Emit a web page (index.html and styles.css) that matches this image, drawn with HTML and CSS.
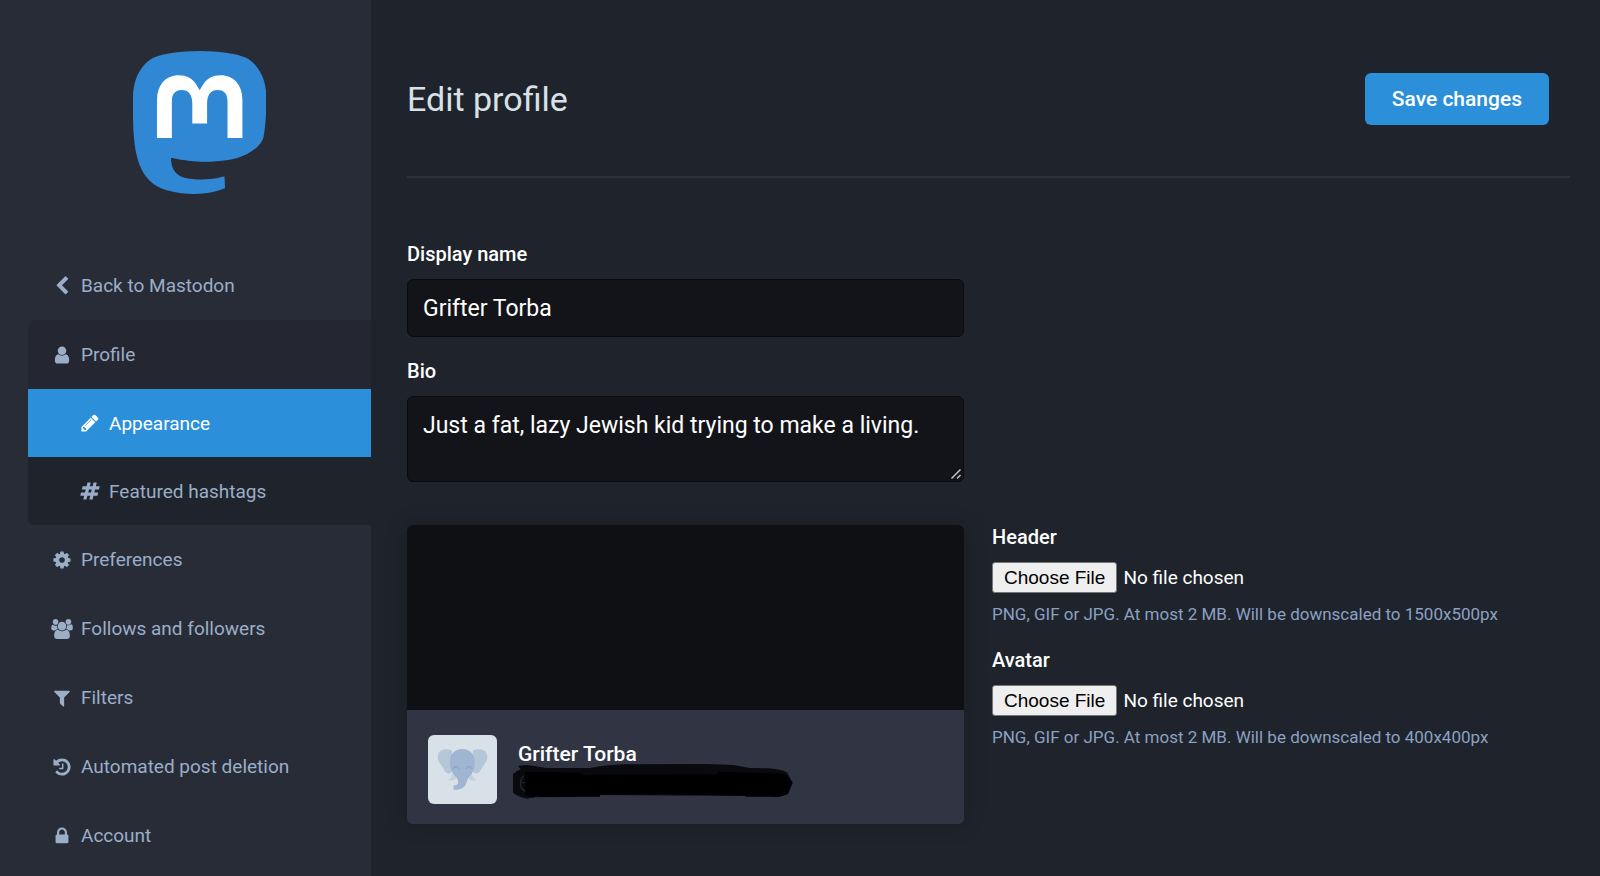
FILE: index.html
```html
<!DOCTYPE html>
<html lang="en">
<head>
    <meta charset="UTF-8">
    <meta name="viewport" content="width=device-width, initial-scale=1.0">
    <title>Edit profile - Mastodon</title>
    <link rel="stylesheet" href="styles.css">
</head>
<body>
    <div class="admin-wrapper">
        <aside class="sidebar">
            <a href="#" class="logo-link" aria-label="Mastodon">
                <svg class="logo" viewBox="0 0 216.4 232">
                    <path fill="#3088d4" d="M211.807 139.088c-3.181 16.366-28.492 34.277-57.562 37.748-15.159 1.809-30.084 3.472-45.999 2.742-26.027-1.193-46.565-6.213-46.565-6.213 0 2.534.156 4.946.469 7.203 3.384 25.686 25.47 27.225 46.391 27.942 21.116.723 39.919-5.206 39.919-5.206l.867 19.09s-14.77 7.931-41.081 9.39c-14.509.797-32.524-.365-53.506-5.919C9.232 213.82 1.406 165.311.209 116.091c-.365-14.614-.14-28.394-.14-39.919 0-50.33 32.976-65.082 32.976-65.082C49.672 3.454 78.204.243 107.865 0h.729c29.661.243 58.211 3.454 74.837 11.09 0 0 32.975 14.752 32.975 65.082 0 0 .414 37.134-4.599 62.916"/>
                    <path fill="#fff" d="M177.51 80.077v60.941h-24.144v-59.15c0-12.469-5.246-18.797-15.74-18.797-11.602 0-17.417 7.507-17.417 22.352v32.377H96.207V85.423c0-14.845-5.816-22.352-17.418-22.352-10.494 0-15.74 6.328-15.74 18.797v59.15H38.905V80.077c0-12.455 3.171-22.352 9.541-29.675 6.569-7.322 15.171-11.076 25.85-11.076 12.355 0 21.711 4.749 27.898 14.247l6.013 10.082 6.015-10.082c6.185-9.498 15.541-14.247 27.898-14.247 10.677 0 19.28 3.754 25.85 11.076 6.368 7.323 9.54 17.22 9.54 29.675"/>
                </svg>
            </a>
            <nav>
                <ul class="nav-list">
                    <li><a href="#" class="nav-link"><svg class="icon" viewBox="0 0 1792 1792"><path d="M1427 301l-531 531 531 531q19 19 19 45t-19 45l-166 166q-19 19-45 19t-45-19l-742-742q-19-19-19-45t19-45l742-742q19-19 45-19t45 19l166 166q19 19 19 45t-19 45z"/></svg>Back to Mastodon</a></li>
                    <li class="open">
                        <a href="#" class="nav-link"><svg class="icon" viewBox="0 0 1792 1792"><path d="M1536 1399q0 109-62.500 187t-150.500 78h-854q-88 0-150.500-78t-62.500-187q0-85 8.500-160.500t31.500-152 58.500-131 94-89 134.500-34.500q131 128 313 128t313-128q76 0 134.500 34.500t94 89 58.500 131 31.500 152 8.500 160.500zm-256-887q0 159-112.500 271.500t-271.500 112.500-271.500-112.500-112.500-271.500 112.500-271.500 271.500-112.500 271.500 112.500 112.500 271.500z"/></svg>Profile</a>
                        <ul class="sub-list">
                            <li><a href="#" class="nav-link sub-link selected" aria-current="page"><svg class="icon" viewBox="0 0 1792 1792"><path d="M491 1536l91-91-235-235-91 91v107h128v128h107zm523-928q0-22-22-22-10 0-17 7l-542 542q-7 7-7 17 0 22 22 22 10 0 17-7l542-542q7-7 7-17zm-54-192l416 416-832 832h-416v-416zm683 96q0 53-37 90l-166 166-416-416 166-165q36-38 90-38 53 0 91 38l235 234q37 39 37 91z"/></svg>Appearance</a></li>
                            <li><a href="#" class="nav-link sub-link"><svg class="icon" viewBox="0 0 1792 1792"><path d="M991 1024l64-256h-254l-64 256h254zm768-504l-56 224q-7 24-31 24h-327l-64 256h311q15 0 25 12 10 14 6 28l-56 224q-5 24-31 24h-327l-81 328q-7 24-31 24h-224q-16 0-26-12-9-12-6-28l78-312h-254l-81 328q-7 24-31 24h-225q-15 0-25-12-9-12-6-28l78-312h-311q-15 0-25-12-9-12-6-28l56-224q7-24 31-24h327l64-256h-311q-15 0-25-12-10-14-6-28l56-224q5-24 31-24h327l81-328q7-24 32-24h224q15 0 25 12 9 12 6 28l-78 312h254l81-328q7-24 32-24h224q15 0 25 12 9 12 6 28l-78 312h311q15 0 25 12 9 12 6 28z"/></svg>Featured hashtags</a></li>
                        </ul>
                    </li>
                    <li><a href="#" class="nav-link"><svg class="icon" viewBox="0 0 1792 1792"><path d="M1152 896q0-106-75-181t-181-75-181 75-75 181 75 181 181 75 181-75 75-181zm512-109v222q0 12-8 23t-20 13l-185 28q-19 54-39 91 35 50 107 138 10 12 10 25t-9 23q-27 37-99 108t-94 71q-12 0-26-9l-138-108q-44 23-91 38-16 136-29 186-7 28-36 28h-222q-14 0-24.500-8.500t-11.500-21.500l-28-184q-49-16-90-37l-141 107q-10 9-25 9-14 0-25-11-126-114-165-168-7-10-7-23 0-12 8-23 15-21 51-66.500t54-70.500q-27-50-41-99l-183-27q-13-2-21-12.500t-8-23.500v-222q0-12 8-23t19-13l186-28q14-46 39-92-40-57-107-138-10-12-10-24 0-10 9-23 26-36 98.500-107.500t94.500-71.500q13 0 26 10l138 107q44-23 91-38 16-136 29-186 7-28 36-28h222q14 0 24.500 8.500t11.500 21.500l28 184q49 16 90 37l142-107q9-9 24-9 13 0 25 10 129 119 165 170 7 8 7 22 0 12-8 23-15 21-51 66.500t-54 70.500q26 50 41 98l183 28q13 2 21 12.500t8 23.500z"/></svg>Preferences</a></li>
                    <li><a href="#" class="nav-link"><svg class="icon" viewBox="128 0 1792 1792"><path d="M657 896q-162 5-265 128h-134q-82 0-138-40.500t-56-118.500q0-353 124-353 6 0 43.500 21t97.500 42.500 119 21.500q67 0 133-23-5 37-5 66 0 159 90 293zm1071 637q0 120-73 189.500t-194 69.500h-874q-121 0-194-69.500t-73-189.500q0-53 3.500-103.500t14-109 26.500-108.500 43-97.500 62-81 85.500-53.500 111.500-20q10 0 43 21.500t73 48 107 48 135 21.500 135-21.500 107-48 73-48 43-21.500q61 0 111.500 20t85.500 53.500 62 81 43 97.500 26.500 108.500 14 109 3.500 103.500zm-1024-1277q0 106-75 181t-181 75-181-75-75-181 75-181 181-75 181 75 75 181zm704 384q0 159-112.500 271.500t-271.500 112.500-271.500-112.500-112.500-271.500 112.500-271.500 271.500-112.500 271.500 112.500 112.500 271.500zm576 225q0 78-56 118.500t-138 40.500h-134q-103-123-265-128 90-134 90-293 0-29-5-66 66 23 133 23 59 0 119-21.500t97.500-42.500 43.500-21q124 0 124 353zm-128-609q0 106-75 181t-181 75-181-75-75-181 75-181 181-75 181 75 75 181z"/></svg>Follows and followers</a></li>
                    <li><a href="#" class="nav-link"><svg class="icon" viewBox="0 0 1792 1792"><path d="M1595 295q17 41-14 70l-493 493v742q0 42-39 59-13 5-25 5-27 0-45-19l-256-256q-19-19-19-45v-486l-493-493q-31-29-14-70 17-39 59-39h1280q42 0 59 39z"/></svg>Filters</a></li>
                    <li><a href="#" class="nav-link"><svg class="icon" viewBox="0 0 1792 1792"><path d="M1664 896q0 156-61 298t-164 245-245 164-298 61q-172 0-327-72.500t-264-204.500q-7-10-6.500-22.500t8.500-20.500l137-138q10-9 25-9 16 2 23 12 73 95 179 147t225 52q104 0 198.500-40.500t163.500-109.500 109.500-163.500 40.500-198.500-40.500-198.500-109.500-163.500-163.500-109.500-198.500-40.500q-98 0-188 35.500t-160 101.500l137 138q31 30 14 69-17 40-59 40h-448q-26 0-45-19t-19-45v-448q0-42 40-59 39-17 69 14l130 129q107-101 244.500-156.500t284.500-55.500q156 0 298 61t245 164 164 245 61 298zm-640-288v448q0 14-9 23t-23 9h-320q-14 0-23-9t-9-23v-64q0-14 9-23t23-9h224v-352q0-14 9-23t23-9h64q14 0 23 9t9 23z"/></svg>Automated post deletion</a></li>
                    <li><a href="#" class="nav-link"><svg class="icon" viewBox="0 0 1792 1792"><path d="M640 768h512v-192q0-106-75-181t-181-75-181 75-75 181v192zm832 96v576q0 40-28 68t-68 28h-960q-40 0-68-28t-28-68v-576q0-40 28-68t68-28h32v-192q0-184 132-316t316-132 316 132 132 316v192h32q40 0 68 28t28 68z"/></svg>Account</a></li>
                </ul>
            </nav>
        </aside>

        <main class="content">
            <div class="content-heading">
                <h2>Edit profile</h2>
                <button type="submit" form="edit-profile" class="btn">Save changes</button>
            </div>

            <form id="edit-profile" class="profile-form">
                <div class="fields-column">
                    <div class="form-group">
                        <label for="display-name">Display name</label>
                        <input type="text" id="display-name" name="display_name" class="text-field" value="Grifter Torba">
                    </div>
                    <div class="form-group">
                        <label for="bio">Bio</label>
                        <div class="bio-wrapper">
                            <textarea id="bio" name="note" class="text-field bio-field">Just a fat, lazy Jewish kid trying to make a living.</textarea>
                            <svg class="resize-grip" viewBox="0 0 12 12"><path d="M1.500 10.500l9-9M7 10.500l3.500-3.500"/></svg>
                        </div>
                    </div>
                </div>

                <div class="card">
                    <div class="card-banner"></div>
                    <div class="card-bar">
                        <svg class="avatar" viewBox="24 29 208 208">
                            <rect x="24" y="29" width="208" height="208" fill="#d9e1e8"/>
                            <path fill="#b6c6d9" d="M96 76C82 69 63 70 56 83c-7 14 1 29 9 38 6 9 9 22 20 24 9 1 15-8 18-17zM160 76c14-7 33-6 40 7 7 14-1 29-9 38-6 9-9 22-20 24-9 1-15-8-18-17z"/>
                            <path fill="#c3d0de" d="M97 144c0 10-5 17-14 21 10 4 21 1 27-8l3-10zM156 144c1 10 6 17 15 21-11 4-21 1-27-8l-3-10z"/>
                            <path fill="#9fb5d1" d="M128 71c-24 0-38 17-38 40 0 22 10 36 19 45 6 7 7 14 5 20-2 4-7 6-13 5v12c17 3 32-3 38-18 3-7 4-14 9-20 9-10 17-23 17-44 0-23-14-40-37-40z"/>
                            <path fill="none" stroke="#829abd" stroke-width="3" stroke-linecap="round" d="M100 130c2-8 13-8 17 0M139 130c3-8 14-8 17 0"/>
                        </svg>
                        <div class="card-name">
                            <strong>Grifter Torba</strong>
                            <svg class="handle-mark" viewBox="339 217 840 108">
                                <path fill="#090a0e" d="M354 225l28-2 58 9h130q60-12 130-11l220-1 80 3 50 9q90-1 112 14l16 30-13 33-27 10-30-3-520-3-88 6-100 1-18 4q-40-8-54-30-10-40 34-58z"/>
                                <path fill="#000" d="M375 243l170 3v6l408-1v-8l200 6 24 26-15 36-26 7h-100v-3l-240-4h-196v7H416v-7l-16 10-25-9z"/>
                                <path fill="none" stroke="#25272d" stroke-width="4" d="M371 255q-14 14-8 35 5 9 13 12M366 276h8"/>
                            </svg>
                        </div>
                    </div>
                </div>

                <div class="uploads">
                    <div class="form-group">
                        <label for="header-file">Header</label>
                        <input type="file" id="header-file" name="header" class="file-field">
                        <p class="hint">PNG, GIF or JPG. At most 2 MB. Will be downscaled to 1500x500px</p>
                    </div>
                    <div class="form-group">
                        <label for="avatar-file">Avatar</label>
                        <input type="file" id="avatar-file" name="avatar" class="file-field">
                        <p class="hint">PNG, GIF or JPG. At most 2 MB. Will be downscaled to 400x400px</p>
                    </div>
                </div>
            </form>
        </main>
    </div>
</body>
</html>
```

FILE: styles.css
```css
:root {
    --sidebar-color: #282c37;
    --background-color: #1f232b;
    --open-color: #242731;
    --highlight-color: #2b90d9;
    --card-color: #313543;
    --field-color: #131419;
    --field-border: #0a0b0e;
    --primary-text: #ffffff;
    --secondary-text: #d9e1e8;
    --muted-text: #9baec8;
    --hint-text: #8ba1c3;
}

* {
    margin: 0;
    padding: 0;
    box-sizing: border-box;
}

body {
    font-family: Roboto, sans-serif;
    font-size: 19px;
    background: var(--background-color);
    color: var(--primary-text);
}

.admin-wrapper {
    display: flex;
    min-height: 100vh;
}

/* Sidebar */
.sidebar {
    flex: 0 0 371px;
    padding-left: 28px;
    background: var(--sidebar-color);
}

.logo-link {
    display: block;
    padding: 51px 0 57px;
}

.logo {
    display: block;
    height: 143px;
    margin: 0 auto;
}

.nav-list,
.sub-list {
    list-style: none;
}

.nav-link {
    display: flex;
    align-items: center;
    gap: 9px;
    height: 69px;
    padding-left: 24px;
    color: var(--muted-text);
    text-decoration: none;
}

.icon {
    width: 20px;
    height: 20px;
    overflow: visible;
    fill: currentColor;
}

.open {
    background: var(--open-color);
    border-radius: 6px 0 0 6px;
    overflow: hidden;
}

.sub-list {
    background: var(--background-color);
}

.sub-link {
    height: 68px;
    padding-left: 52px;
}

.selected {
    background: var(--highlight-color);
    color: var(--primary-text);
}

/* Content */
.content {
    flex: 1;
    padding: 0 30px 50px 36px;
}

.content-heading {
    display: flex;
    justify-content: space-between;
    align-items: center;
    padding: 73px 21px 51px 0;
    border-bottom: 2px solid #2d313e;
}

h2 {
    color: var(--secondary-text);
    font-size: 34px;
    line-height: 40px;
    font-weight: 400;
}

.btn {
    height: 52px;
    padding: 0 27px;
    background: var(--highlight-color);
    color: var(--primary-text);
    border: none;
    border-radius: 6px;
    font-family: inherit;
    font-size: 21px;
    font-weight: 500;
    cursor: pointer;
}

.profile-form {
    display: grid;
    grid-template-columns: 1fr 1fr;
    gap: 43px 28px;
    padding: 64px 21px 0 0;
}

.fields-column {
    grid-column: 1;
}

.form-group {
    margin-bottom: 22px;
}

.form-group:last-child {
    margin-bottom: 0;
}

.form-group label {
    display: block;
    margin-bottom: 13px;
    font-size: 20px;
    line-height: 24px;
    font-weight: 500;
}

.text-field {
    display: block;
    width: 100%;
    height: 58px;
    padding: 15px;
    background: var(--field-color);
    color: var(--primary-text);
    border: 1px solid var(--field-border);
    border-radius: 6px;
    font-family: inherit;
    font-size: 23px;
    line-height: 28px;
}

.text-field:focus {
    outline: none;
    border-color: var(--highlight-color);
}

.bio-wrapper {
    position: relative;
}

.bio-field {
    height: 86px;
    resize: vertical;
}

.bio-field::-webkit-resizer {
    background: transparent;
}

/* Sits over the corner of the textarea */
.resize-grip {
    position: absolute;
    right: 2px;
    bottom: 2px;
    width: 12px;
    height: 12px;
    fill: none;
    stroke: #c4c4c6;
    stroke-width: 1.5;
    pointer-events: none;
}

/* Profile preview */
.card {
    grid-column: 1;
    border-radius: 6px;
    overflow: hidden;
    box-shadow: 0 0 22px rgba(0, 0, 0, 0.2);
}

.card-banner {
    height: 185px;
    background: #0e1013;
}

.card-bar {
    display: flex;
    gap: 21px;
    padding: 25px 21px 20px;
    background: var(--card-color);
}

.avatar {
    width: 69px;
    height: 69px;
    border-radius: 6px;
}

.card-name strong {
    display: block;
    padding-top: 7px;
    font-size: 21px;
    line-height: 24px;
    font-weight: 500;
}

.handle-mark {
    display: block;
    width: 280px;
    height: 36px;
    margin: -3px 0 0 -5px;
}

/* Image uploads */
.uploads {
    display: flex;
    flex-direction: column;
}

.file-field {
    display: block;
    width: 100%;
    height: 31px;
    color: var(--primary-text);
    font-family: inherit;
    font-size: 19px;
}

.file-field::file-selector-button {
    height: 31px;
    margin-right: 6px;
    padding: 0 11px;
    background: #efefef;
    color: #000;
    border: 1px solid #767676;
    border-radius: 3px;
    font-family: "Liberation Sans", Arial, sans-serif;
    font-size: 19px;
}

.hint {
    margin-top: 9px;
    color: var(--hint-text);
    font-size: 17px;
    line-height: 24px;
}
```
